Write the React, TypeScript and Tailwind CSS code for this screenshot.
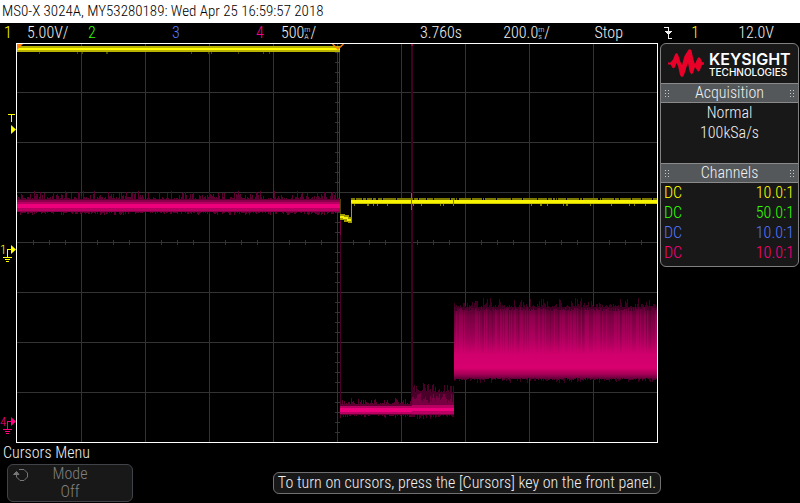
import React from 'react';

const PLOT_W = 642;
const PLOT_H = 400;

// repeatable noise so the traces look the same on every render
const noise = (x: number, seed: number) => {
  const v = Math.sin(x * 12.9898 + seed * 78.233) * 43758.5453;
  return v - Math.floor(v);
};

// one vertical stroke per column between the two edges
const columns = (
  from: number,
  to: number,
  top: (x: number) => number,
  bottom: (x: number) => number
) => {
  let d = '';
  for (let x = from; x < to; x++) {
    d += `M${x + 0.5} ${top(x).toFixed(1)}V${bottom(x).toFixed(1)}`;
  }
  return d;
};

// mostly short spikes with a few long ones
const spike = (x: number, seed: number, size: number) =>
  Math.round(Math.pow(noise(x, seed), 2.6) * size);

const Graticule: React.FC = () => {
  let lines = '';
  let ticks = '';
  for (let i = 1; i < 10; i++) lines += `M${1 + i * 64 + 0.5} 0V${PLOT_H}`;
  for (let i = 1; i < 8; i++) lines += `M0 ${i * 50 - 0.5}H${PLOT_W}`;
  for (let x = 17.5; x < PLOT_W; x += 16) ticks += `M${x} 197V202`;
  for (let y = 9.5; y < PLOT_H; y += 10) ticks += `M319 ${y}H324`;
  return (
    <g stroke="#333333" fill="none" shapeRendering="crispEdges">
      <path d={lines} />
      <path d={ticks} />
    </g>
  );
};

const CurrentTrace: React.FC = () => (
  <g fill="none" shapeRendering="crispEdges">
    {/* before the trigger */}
    <path
      stroke="#5c0032"
      d={columns(1, 324, (x) => 156 - spike(x, 1, 8), (x) => 169 + spike(x, 2, 3))}
    />
    <path stroke="#8a004a" d="M1 163H324" strokeWidth="12" />
    <path stroke="#b80062" d="M1 163.5H324" strokeWidth="9" />
    <path stroke="#ee007c" d="M1 163H324" strokeWidth="4" />

    {/* falling edge and the glitch */}
    <path stroke="#480028" d="M324.5 160V362" />
    <path stroke="#7a0044" d="M324.5 178V192" />
    <path stroke="#400022" d="M396 1V362" strokeWidth="2" />
    <path stroke="#8c004e" d="M396 1V3" strokeWidth="2" />

    {/* idle */}
    <path
      stroke="#5c0032"
      d={columns(324, 396, (x) => 361 - spike(x, 3, 6), (x) => 372 + spike(x, 4, 3))}
    />
    <path stroke="#b80062" d="M324 367H396" strokeWidth="8" />
    <path stroke="#ee007c" d="M324 367H396" strokeWidth="4" />

    {/* start up */}
    <path
      stroke="#4a0028"
      d={columns(396, 438, (x) => 349 - spike(x, 5, 9), (x) => 372 + spike(x, 6, 4))}
    />
    <path
      stroke="#780042"
      d={columns(396, 438, (x) => 350 + noise(x, 7) * 10, () => 372)}
    />
    <path stroke="#b80062" d="M396 366H438" strokeWidth="9" />
    <path stroke="#ee007c" d="M396 366H438" strokeWidth="3" />

    {/* full load */}
    <path
      stroke="#400024"
      d={columns(438, 641, (x) => 264 - spike(x, 8, 9), (x) => 335 + spike(x, 9, 5))}
    />
    <path
      stroke="url(#load)"
      d={columns(438, 641, (x) => 264 + noise(x, 10) * 4, (x) => 335 + noise(x, 11) * 2)}
    />
    <path
      stroke="url(#streak)"
      d={columns(438, 641, () => 264, (x) => (noise(x, 12) > 0.6 ? 320 : 264))}
    />
    <path
      stroke="url(#streak)"
      d={columns(438, 641, () => 264, (x) => (noise(x, 13) > 0.75 ? 320 : 264))}
    />
  </g>
);

const VoltageTrace: React.FC = () => (
  <g fill="none" shapeRendering="crispEdges">
    <path stroke="#b8b200" d="M1 6H324" strokeWidth="6" />
    <path stroke="#fffa00" d="M1 6H324" strokeWidth="2" />
    <path
      stroke="#4a4800"
      d={columns(1, 324, () => 9, (x) => (noise(x, 20) > 0.95 ? 11 : 9))}
    />
    <path stroke="#4a4800" d="M323.5 9V156M324.5 156V172" />
    <path fill="#a09c00" d="M324 171h5v1h4v2h3v6h-4v-1h-4v-2h-4z" />
    <path stroke="#f8f400" d="M324 174h4M327 175h5M331 177h5" strokeWidth="2" />
    <path stroke="#a09c00" d="M335.5 158V180" />
    <path
      stroke="#7c7800"
      d={columns(335, 641, (x) => (noise(x, 21) > 0.1 ? 155 : 157), (x) => (noise(x, 22) > 0.95 ? 163 : 161))}
    />
    <path stroke="#c8c400" d="M335 159.5H641" strokeWidth="3" />
    <path stroke="#f8f400" d="M335 158.5H641" strokeWidth="3" />
    <path stroke="#7c7800" d="M395.5 150V167M437.5 155V163" />
  </g>
);

const Plot: React.FC = () => (
  <svg
    className="block h-[400px] min-w-0 flex-1"
    viewBox={`0 0 ${PLOT_W} ${PLOT_H}`}
    preserveAspectRatio="none"
    role="img"
    aria-label="Waveforms"
  >
    <defs>
      <linearGradient id="load" gradientUnits="userSpaceOnUse" x1="0" y1="262" x2="0" y2="337">
        <stop offset="0" stopColor="#500030" />
        <stop offset="0.15" stopColor="#8c004c" />
        <stop offset="0.45" stopColor="#b00060" />
        <stop offset="0.65" stopColor="#d0006c" />
        <stop offset="0.84" stopColor="#d8006e" />
        <stop offset="0.92" stopColor="#a80058" />
        <stop offset="1" stopColor="#500030" />
      </linearGradient>
      <linearGradient id="streak" gradientUnits="userSpaceOnUse" x1="0" y1="264" x2="0" y2="312">
        <stop offset="0" stopColor="#400024" stopOpacity="0.35" />
        <stop offset="1" stopColor="#400024" stopOpacity="0" />
      </linearGradient>
    </defs>
    <Graticule />
    <CurrentTrace />
    <VoltageTrace />
    <path d="M1 1H7L1 7Z" fill="#ff8000" />
    <path d="M316.500 1L322 6L327.500 1" fill="none" stroke="#ff8000" strokeWidth="1.4" />
    <rect
      x="0.5"
      y="0.5"
      width={PLOT_W - 1}
      height={PLOT_H - 1}
      fill="none"
      stroke="#ffffff"
      shapeRendering="crispEdges"
    />
  </svg>
);

const Markers: React.FC = () => (
  <svg className="block h-[400px] w-4 shrink-0" viewBox="0 0 16 400">
    <g fill="#ffff00">
      <path d="M8 71h7v1h-3v7h-1v-7h-3z" />
      <path d="M11 82V91L16 86.5Z" />
      <path d="M11 202V211L16 206.5Z" />
      <text x="0" y="211" fontSize="13">
        1
      </text>
    </g>
    <path
      d="M12 206.5H7.5V214M3 214.5H12M5 216.5H10M6 218.5H9"
      fill="none"
      stroke="#ffff00"
      shapeRendering="crispEdges"
    />
    <g fill="#ff0080">
      <path d="M11 374V383L16 378.5Z" />
      <text x="0" y="383" fontSize="13">
        4
      </text>
    </g>
    <path
      d="M12 378.5H7.5V386M3 386.5H12M5 388.5H10M6 390.5H9"
      fill="none"
      stroke="#ff0080"
      shapeRendering="crispEdges"
    />
  </svg>
);

// milli prefix stacked over the unit
const Milli: React.FC<{ unit: string }> = ({ unit }) => (
  <span className="flex flex-col text-[8px] leading-[7px]">
    <span>m</span>
    <span>{unit}</span>
  </span>
);

const StatusBar: React.FC = () => (
  <div className="flex h-5 items-center pl-1 leading-[18px]">
    <div className="flex w-[84px]">
      <span className="w-[23px] text-[#ffff00]">1</span>
      <span>5.00V/</span>
    </div>
    <div className="w-[84px] text-[#33ff00]">2</div>
    <div className="w-[84px] text-[#5577ff]">3</div>
    <div className="flex w-[84px] items-center">
      <span className="w-[25px] text-[#ff0080]">4</span>
      <span>500</span>
      <Milli unit="A" />
      <span>/</span>
    </div>
    <div className="flex flex-1 items-center">
      <span className="flex-1 text-right">3.760s</span>
      <span className="flex w-[88px] items-center justify-end">
        <span>200.0</span>
        <Milli unit="s" />
        <span>/</span>
      </span>
      <span className="w-[73px] text-right">Stop</span>
      <span className="flex w-[49px] justify-end">
        <svg className="h-3 w-2" viewBox="0 0 8 12" shapeRendering="crispEdges">
          <path d="M0 0.5H4.5V11.5H8" fill="none" stroke="#f0f0f0" />
          <path d="M0 4H8L4.5 8Z" fill="#f0f0f0" />
        </svg>
      </span>
      <span className="w-[27px] text-right text-[#ffff00]">1</span>
      <span className="w-[101px] pr-[26px] text-right">12.0V</span>
    </div>
  </div>
);

const Grip: React.FC = () => (
  <svg className="h-[7px] w-[4px]" viewBox="0 0 4 7" fill="#c8c8c8" shapeRendering="crispEdges">
    <path d="M0 0h1v1H0zM3 0h1v1H3zM0 3h1v1H0zM3 3h1v1H3zM0 6h1v1H0zM3 6h1v1H3z" />
  </svg>
);

const PanelHeader: React.FC<{ title: string }> = ({ title }) => (
  <div className="flex h-5 items-center justify-between border-y border-[#8a8a8a] bg-[#54585a] px-1 leading-[18px]">
    <Grip />
    <h2>{title}</h2>
    <Grip />
  </div>
);

const channels = [
  { coupling: 'DC', probe: '10.0:1', color: 'text-[#ffff00]' },
  { coupling: 'DC', probe: '50.0:1', color: 'text-[#33ff00]' },
  { coupling: 'DC', probe: '10.0:1', color: 'text-[#5577ff]' },
  { coupling: 'DC', probe: '10.0:1', color: 'text-[#ff0080]' },
];

const SidePanel: React.FC = () => (
  <aside className="mr-px ml-[2px] w-[139px] shrink-0 self-start overflow-hidden rounded-md border border-[#808080] bg-[#181818] pb-[3px] leading-5">
    <div className="flex h-[39px] items-center gap-[5px] pl-[7px]">
      <svg className="h-[29px] w-[36px] shrink-0" viewBox="0 0 36 29" fill="#e90029">
        <path d="M0 13.500H2.500L5 10.500L7 5.500Q8.500 3 10 5.500L12.500 13L14 16L16.500 7L20 1.500Q21.500 -1 23.500 1.500L25.500 11L27 15L29 10.500Q31 6 33 10.500L34 13L36 13.500V15.500L34 16L32 21Q30.500 24 29 21L27 18L25 24Q23 27 21.500 22L20 14L18.500 18L16 26Q14 30 12 26L10 17L8.500 14L7 18Q5.500 20.500 4 18L2.500 15.500H0Z" />
      </svg>
      <div className="font-['Inter',sans-serif] text-white">
        <div className="text-[16px] leading-4 font-semibold">KEYSIGHT</div>
        <div className="text-[10px] leading-[10px] font-medium">TECHNOLOGIES</div>
      </div>
    </div>
    <PanelHeader title="Acquisition" />
    <div className="h-[60px] text-center">
      <p>Normal</p>
      <p>100kSa/s</p>
    </div>
    <PanelHeader title="Channels" />
    <table className="w-full">
      <tbody>
        {channels.map((ch, i) => (
          <tr key={i} className={ch.color}>
            <td className="pl-[3px]">{ch.coupling}</td>
            <td className="pr-1 text-right">{ch.probe}</td>
          </tr>
        ))}
      </tbody>
    </table>
  </aside>
);

const SoftKeys: React.FC = () => (
  <footer className="flex items-start justify-between">
    <div>
      <h2 className="pl-[3px] leading-5">Cursors Menu</h2>
      <button
        type="button"
        className="relative mt-px ml-[7px] block w-[126px] rounded-md border border-[#404448] bg-[#181818] text-center leading-[18px] text-[#808080]"
      >
        <svg className="absolute top-[3px] left-[5px] h-[14px] w-[16px]" viewBox="0 0 16 14" fill="none" stroke="#777777">
          <path d="M6 1.500H11L14.500 5V9L11 12.500H7L3.500 9V4" />
          <path d="M0.500 6.500H6L3.500 3.500Z" fill="#777777" />
        </svg>
        <span className="block">Mode</span>
        <span className="block">Off</span>
      </button>
    </div>
    <p className="mt-[29px] mr-[139px] rounded-md border border-[#707070] bg-[#181818] px-1 leading-5">
      To turn on cursors, press the [Cursors] key on the front panel.
    </p>
  </footer>
);

const App: React.FC = () => {
  return (
    <div className="min-h-screen bg-black font-['Roboto_Condensed_Light','Roboto_Condensed','Liberation_Sans_Narrow',sans-serif] text-[16px] text-[#f0f0f0]">
      <header className="h-[23px] bg-white pl-[2px] text-[15px] leading-[23px] text-black">
        <h1>MS0-X 3024A, MY53280189: Wed Apr 25 16:59:57 2018</h1>
      </header>
      <StatusBar />
      <main className="flex">
        <Markers />
        <Plot />
        <SidePanel />
      </main>
      <SoftKeys />
    </div>
  );
};

export default App;
